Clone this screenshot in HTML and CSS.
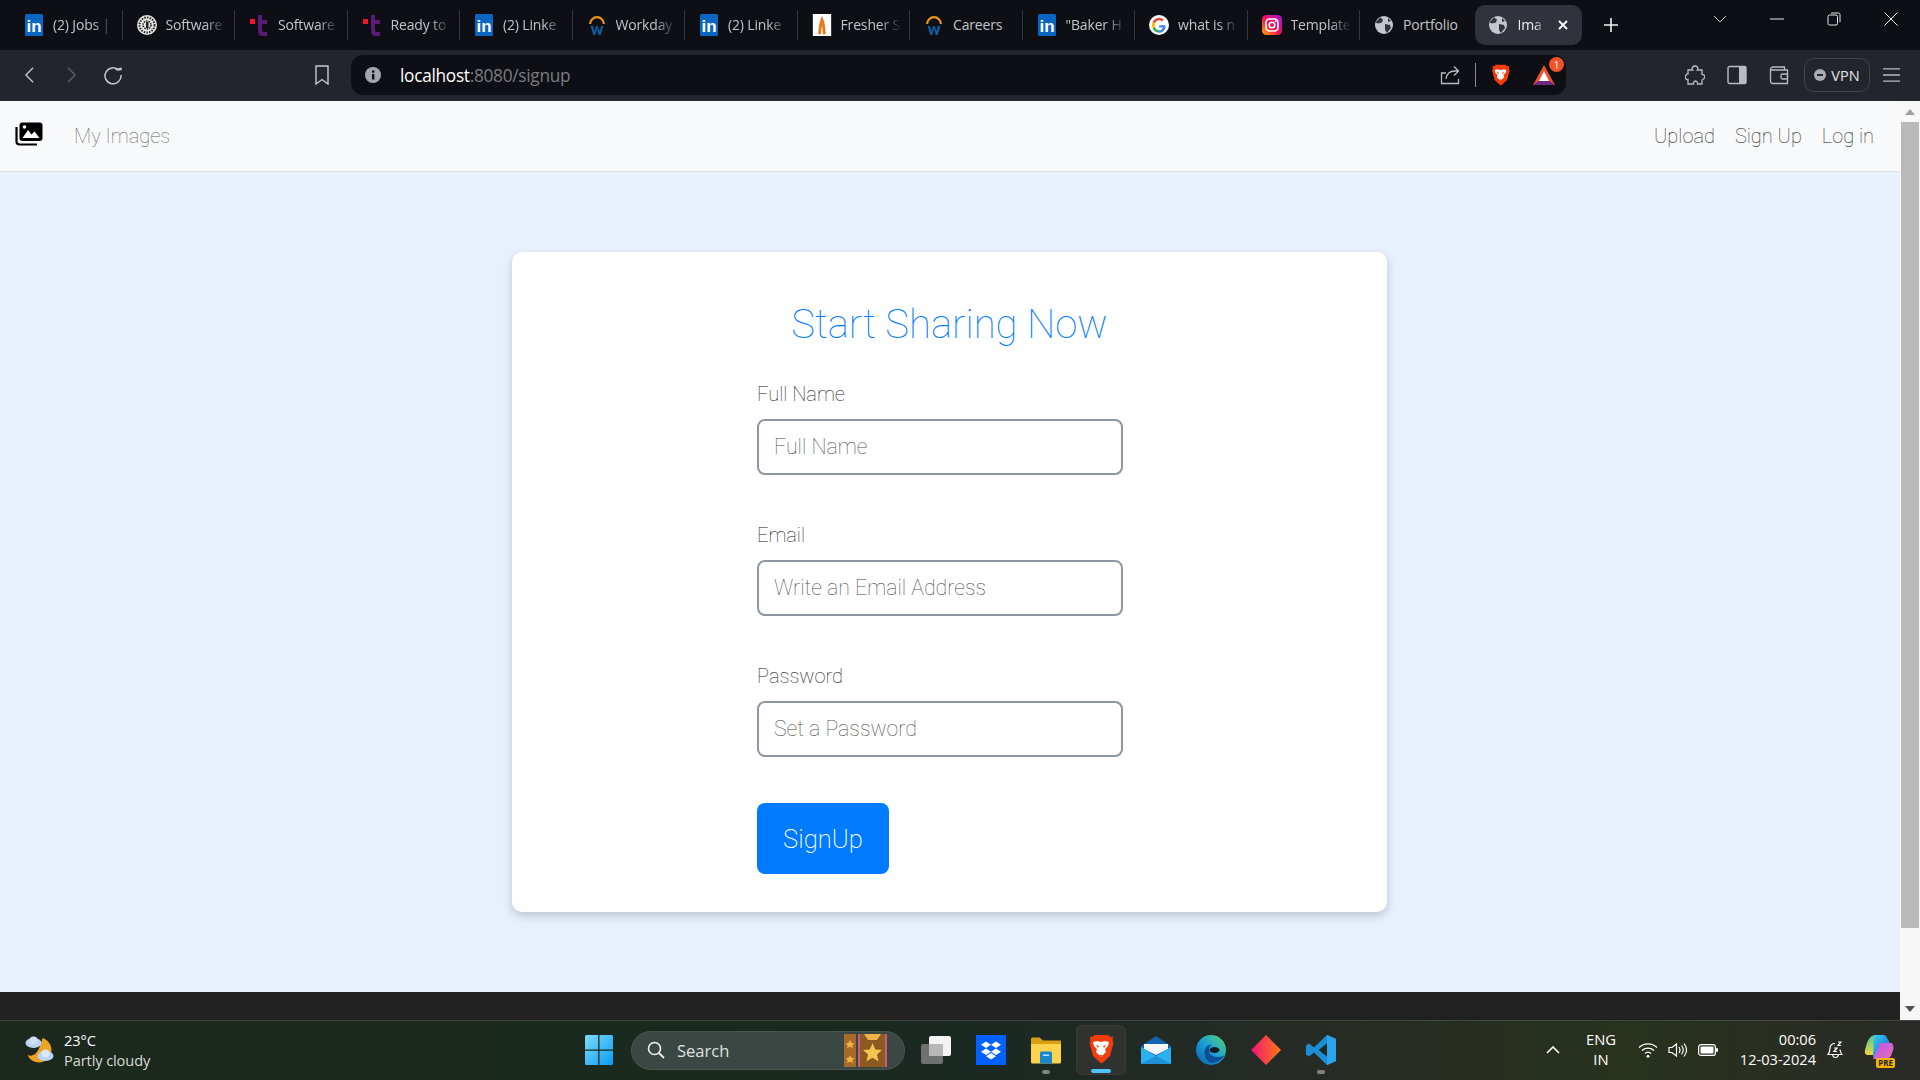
FILE: index.html
```html
<!DOCTYPE html>
<html lang="en">
<head>
<meta charset="utf-8">
<title>Images</title>
<link rel="stylesheet" href="styles.css">
</head>
<body>
<svg class="defs" width="0" height="0" aria-hidden="true">
  <symbol id="i-in" viewBox="0 0 18 22">
    <rect x="0" y="0" width="18" height="22" rx="1.500" fill="#0a66c2"/>
    <text x="9" y="18" text-anchor="middle" class="logo-in">in</text>
  </symbol>
  <symbol id="i-t" viewBox="0 0 20 22">
    <rect x="1" y="5" width="5" height="5" fill="#f0142f"/>
    <path d="M9 1h4v5h5v4h-5v6q0 2 2 2h3v4h-4q-5 0-5-5z" fill="#5a1a78"/>
  </symbol>
  <symbol id="i-w" viewBox="0 0 20 24">
    <path d="M2.500 11a7.500 7.500 0 0 1 15 0" fill="none" stroke="#e8961e" stroke-width="2.400"/>
    <path d="M3 13l3 10h2l2-7 2 7h2l3-10h-2.600l-1.600 6-2-6h-1.600l-2 6-1.600-6z" fill="#0b5fa5"/>
  </symbol>
  <symbol id="i-globe" viewBox="0 0 20 20">
    <circle cx="10" cy="10" r="9" fill="#c4c6cb"/>
    <path d="M6 2.500l3 2-1 3-4 1-2.500-1zM11 9l5 1 1 3-4 5-2-3zM14 3l3 3-3 1z" fill="#31343b"/>
  </symbol>
  <symbol id="i-lion" viewBox="0 0 26 30">
    <path d="M6 1h14l2 2 3-.5-.5 4 1 2.500-3.500 13-6.500 6-2 1.500-2-1.500-6.500-6L1.500 9l1-2.500-.5-4 3 .5z" fill="#f23c0c"/>
    <path d="M5 8l4-1 4 1 4-1 4 1-1 4-3 3 1 3-5 5-5-5 1-3-3-3z" fill="#fff"/>
    <path d="M8 11l3 1-1 2zM18 11l-3 1 1 2zM11 21h4l-2 2z" fill="#f23c0c"/>
  </symbol>
</svg>

<div class="app">
  <header class="tabbar">
    <div class="tabs">
      <div class="tab"><svg class="fav" viewBox="0 0 18 22"><use href="#i-in"/></svg><span class="tab-title">(2) Jobs |</span></div>
      <div class="tab"><svg class="fav" viewBox="0 0 20 20"><circle cx="10" cy="10" r="10" fill="#e8e8e8"/><circle cx="10" cy="10" r="7.500" fill="none" stroke="#222" stroke-width="2" stroke-dasharray="1.500 1.200"/><circle cx="10" cy="10" r="4" fill="none" stroke="#222" stroke-width="1.600" stroke-dasharray="1.500 1"/><rect x="9" y="7" width="2.500" height="6" fill="#222"/></svg><span class="tab-title">Software</span></div>
      <div class="tab"><svg class="fav" viewBox="0 0 20 22"><use href="#i-t"/></svg><span class="tab-title">Software</span></div>
      <div class="tab"><svg class="fav" viewBox="0 0 20 22"><use href="#i-t"/></svg><span class="tab-title">Ready to</span></div>
      <div class="tab"><svg class="fav" viewBox="0 0 18 22"><use href="#i-in"/></svg><span class="tab-title">(2) Linke</span></div>
      <div class="tab"><svg class="fav" viewBox="0 0 20 24"><use href="#i-w"/></svg><span class="tab-title">Workday</span></div>
      <div class="tab"><svg class="fav" viewBox="0 0 18 22"><use href="#i-in"/></svg><span class="tab-title">(2) Linke</span></div>
      <div class="tab"><svg class="fav" viewBox="0 0 20 24"><rect width="20" height="24" fill="#fff"/><path d="M10 2q4 9 4 20h-3q0-6-1-9-1 3-1 9H6q0-11 4-20z" fill="#e8781a"/></svg><span class="tab-title">Fresher S</span></div>
      <div class="tab"><svg class="fav" viewBox="0 0 20 24"><use href="#i-w"/></svg><span class="tab-title tab-title-full">Careers</span></div>
      <div class="tab"><svg class="fav" viewBox="0 0 18 22"><use href="#i-in"/></svg><span class="tab-title">"Baker H</span></div>
      <div class="tab"><svg class="fav" viewBox="0 0 20 20"><circle cx="10" cy="10" r="10" fill="#fff"/><path d="M16.500 10.200h-6.300v2.400h3.600a3.900 3.900 0 0 1-3.700 2.700V18a6.600 6.600 0 0 0 6.400-7.800z" fill="#4285f4"/><path d="M5.900 11.800 3.700 13.400A7.300 7.300 0 0 0 10 17.500v-2.200a4.500 4.500 0 0 1-4.100-3.500z" fill="#34a853"/><path d="M5.700 10c0-.7.100-1.300.3-1.900L3.700 6.500a7.300 7.300 0 0 0 0 6.900l2.200-1.600c-.1-.5-.2-1.200-.2-1.800z" fill="#fbbc05"/><path d="M10 5.300c1.200 0 2.200.4 3 1.100l1.800-1.800A7.300 7.300 0 0 0 3.700 6.500L6 8.100a4.400 4.400 0 0 1 4-2.800z" fill="#ea4335"/></svg><span class="tab-title">what is n</span></div>
      <div class="tab"><svg class="fav" viewBox="0 0 20 20"><defs><linearGradient id="ig" x1="0" y1="1" x2="1" y2="0"><stop offset="0" stop-color="#fdb300"/><stop offset=".45" stop-color="#f3134f"/><stop offset="1" stop-color="#a510e0"/></linearGradient></defs><rect width="20" height="20" rx="4.500" fill="url(#ig)"/><rect x="4" y="4" width="12" height="12" rx="3.500" fill="none" stroke="#fff" stroke-width="1.600"/><circle cx="10" cy="10" r="2.800" fill="none" stroke="#fff" stroke-width="1.600"/><circle cx="13.700" cy="6.300" r="1" fill="#fff"/></svg><span class="tab-title">Template</span></div>
      <div class="tab tab-last"><svg class="fav" viewBox="0 0 20 20"><use href="#i-globe"/></svg><span class="tab-title tab-title-full">Portfolio</span></div>
      <div class="tab tab-active"><svg class="fav" viewBox="0 0 20 20"><use href="#i-globe"/></svg><span class="tab-title">Ima</span>
        <svg class="tab-x" viewBox="0 0 10 10"><path d="M1 1l8 8M9 1l-8 8" stroke="#fff" stroke-width="1.800" fill="none"/></svg>
      </div>
    </div>
    <svg class="newtab" viewBox="0 0 16 16"><path d="M8 1v14M1 8h14" stroke="#f2f2f2" stroke-width="1.600" fill="none"/></svg>
    <div class="winctl">
      <div class="winbtn"><svg viewBox="0 0 14 8" width="14" height="8"><path d="M1 1l6 6 6-6" stroke="#c8c8c8" fill="none"/></svg></div>
      <div class="winbtn"><svg viewBox="0 0 14 2" width="14" height="2"><path d="M0 1h14" stroke="#e8e8e8"/></svg></div>
      <div class="winbtn"><svg viewBox="0 0 14 14" width="14" height="14"><rect x="1" y="3" width="9.500" height="10" rx="1.500" fill="none" stroke="#e8e8e8"/><path d="M4 1h7.500q1.500 0 1.500 1.500V10" fill="none" stroke="#e8e8e8"/></svg></div>
      <div class="winbtn"><svg viewBox="0 0 14 14" width="14" height="14"><path d="M.5.500l13 13M13.500.500l-13 13" stroke="#f0f0f0" fill="none"/></svg></div>
    </div>
  </header>

  <div class="toolbar">
    <div class="tb-btn"><svg viewBox="0 0 12 20" width="11" height="18"><path d="M10 2L2 10l8 8" fill="none" stroke="#c6c8cd" stroke-width="1.500"/></svg></div>
    <div class="tb-btn"><svg viewBox="0 0 12 20" width="11" height="18"><path d="M2 2l8 8-8 8" fill="none" stroke="#5e6168" stroke-width="1.500"/></svg></div>
    <div class="tb-btn"><svg viewBox="0 0 20 20" width="20" height="20"><path d="M16 5.500A8 8 0 1 0 18 10" fill="none" stroke="#c6c8cd" stroke-width="1.500"/><path d="M12.500 4.500h5.500v-1z" fill="#c6c8cd" stroke="#c6c8cd" stroke-width="1.500"/></svg></div>
    <div class="tb-btn tb-bookmark"><svg viewBox="0 0 14 20" width="14" height="20"><path d="M1 1h12v18l-6-4.500L1 19z" fill="none" stroke="#c6c8cd" stroke-width="1.400"/></svg></div>
    <div class="urlbar">
      <svg class="url-info" viewBox="0 0 16 16"><circle cx="8" cy="8" r="8" fill="#a3a6ac"/><rect x="7" y="7" width="2.400" height="5.500" fill="#0e0f14"/><rect x="7" y="3.500" width="2.400" height="2.200" fill="#0e0f14"/></svg>
      <span class="url-text"><span class="url-host">localhost</span>:8080/signup</span>
      <svg class="url-share" viewBox="0 0 20 20"><path d="M6 8H1.500v10.500h17V14" fill="none" stroke="#b9bbc0" stroke-width="1.300"/><path d="M6 14q1-8 9-8h3M14 1.500L18.500 6 14 10.500" fill="none" stroke="#b9bbc0" stroke-width="1.300"/></svg>
      <span class="url-sep"></span>
      <svg class="url-lion" viewBox="0 0 26 30"><use href="#i-lion"/></svg>
      <div class="bat">
        <svg viewBox="0 0 24 24" width="24" height="24"><path d="M12 2l11 20H1z" fill="#f0502a"/><path d="M1 22l5.500-4h11l5.500 4z" fill="#6a2a88"/><path d="M12 8l5 10H7z" fill="#fff"/></svg>
        <span class="bat-badge">1</span>
      </div>
    </div>
    <div class="tb-btn tb-ext"><svg viewBox="0 0 20 20" width="20" height="20"><path d="M7 3.500Q7.500 1 10 1t3 2.500q0 1-.5 1.500H17v4.500q2-.5 2.500 1.500t-1 3-1.500.5v4.500h-4.500q.5-2.500-2-3-2.500.5-2 3H3v-4.500q-2 .5-2.500-1.500T1.500 9.500 3 9.500V5h4.500Q7 4.500 7 3.500z" fill="none" stroke="#b9bbc0" stroke-width="1.300"/></svg></div>
    <div class="tb-btn"><svg viewBox="0 0 20 20" width="20" height="20"><rect x="1" y="1.500" width="18" height="17" rx="1.500" fill="none" stroke="#b9bbc0" stroke-width="1.400"/><rect x="12" y="1.500" width="7" height="17" fill="#b9bbc0"/></svg></div>
    <div class="tb-btn"><svg viewBox="0 0 20 20" width="20" height="20"><path d="M1.500 5q0-3 3-3h11v3M1.500 5v11q0 2.500 2.500 2.500h14.500V5H1.500z" fill="none" stroke="#b9bbc0" stroke-width="1.300"/><rect x="12" y="9" width="6.500" height="5" rx="1.500" fill="none" stroke="#b9bbc0" stroke-width="1.300"/></svg></div>
    <div class="vpn"><svg viewBox="0 0 12 12" width="12" height="12"><circle cx="6" cy="6" r="6" fill="#a9acb2"/><rect x="3" y="5" width="6" height="2" fill="#23252d"/></svg><span>VPN</span></div>
    <div class="tb-btn"><svg viewBox="0 0 18 16" width="17" height="16"><path d="M0 1.500h18M0 8h18M0 14.500h18" stroke="#b9bbc0" stroke-width="1.400"/></svg></div>
  </div>

  <div class="viewport">
    <div class="page">
      <nav class="navbar">
        <svg class="brand" viewBox="0 0 28 24"><path d="M1.500 5v14.500q0 3 3 3H22" fill="none" stroke="#000" stroke-width="2.200"/><rect x="4.500" y="0.500" width="23" height="18.500" rx="3" fill="#000"/><path d="M7.500 16l5.500-8 3.500 4.500 3-3 5 6.500z" fill="#fff"/><circle cx="9.500" cy="5" r="1.800" fill="#fff"/></svg>
        <a class="nav-brand-link">My Images</a>
        <div class="nav-right">
          <a class="nav-link">Upload</a>
          <a class="nav-link">Sign Up</a>
          <a class="nav-link">Log in</a>
        </div>
      </nav>
      <main class="content">
        <section class="card">
          <h1 class="card-title">Start Sharing Now</h1>
          <form class="form">
            <div class="group">
              <label class="label" for="f-name">Full Name</label>
              <input class="input" id="f-name" type="text" placeholder="Full Name">
            </div>
            <div class="group">
              <label class="label" for="f-email">Email</label>
              <input class="input" id="f-email" type="email" placeholder="Write an Email Address">
            </div>
            <div class="group">
              <label class="label" for="f-pass">Password</label>
              <input class="input" id="f-pass" type="password" placeholder="Set a Password">
            </div>
            <button class="submit" type="button">SignUp</button>
          </form>
        </section>
      </main>
      <div class="strip"></div>
    </div>
    <aside class="scrollbar">
      <span class="arrow arrow-up"></span>
      <span class="thumb"></span>
      <span class="arrow arrow-down"></span>
    </aside>
  </div>

  <footer class="taskbar">
    <div class="weather">
      <svg class="weather-icon" viewBox="0 0 30 30"><path d="M18 3a12.500 12.500 0 1 1-15 17q10 4 15-17z" fill="#eea324"/><ellipse cx="9" cy="8" rx="8" ry="5" fill="#b9d4f4"/><circle cx="9" cy="5.500" r="4" fill="#cfe0f6"/><ellipse cx="21" cy="21" rx="8" ry="5" fill="#b9d4f4"/><circle cx="21" cy="18.500" r="4" fill="#dbe8f8"/></svg>
      <div class="weather-text"><span class="temp">23°C</span><span class="cond">Partly cloudy</span></div>
    </div>
    <div class="task-center">
      <svg class="task-win" viewBox="0 0 28 30"><defs><linearGradient id="wg" x1="0" y1="0" x2="1" y2="1"><stop offset="0" stop-color="#7fdcfb"/><stop offset="1" stop-color="#0a9af5"/></linearGradient></defs><path d="M0 1.500Q0 0 1.500 0h11.700v14.500H0zM14.500 0h12Q28 0 28 1.500v13H14.500zM0 15.800h13.200V30H1.500Q0 30 0 28.500zM14.500 15.800H28v12.700q0 1.500-1.500 1.500h-12z" fill="url(#wg)"/></svg>
      <div class="search">
        <svg class="search-icon" viewBox="0 0 18 18"><circle cx="7.500" cy="7.500" r="6" fill="none" stroke="#f0f0f0" stroke-width="1.600"/><path d="M12 12l5 5" stroke="#f0f0f0" stroke-width="1.800"/></svg>
        <span class="search-text">Search</span>
        <svg class="search-art" viewBox="0 0 43 33"><rect width="12" height="33" fill="#a86a28"/><rect x="14" width="29" height="33" fill="#8a5a20"/><rect x="14" width="2" height="33" fill="#d0587a"/><rect x="41" width="2" height="33" fill="#d0587a"/><path d="M28.500 9l2.800 6.500 6.700.6-5 4.500 1.500 6.700-6-3.500-6 3.500 1.500-6.700-5-4.500 6.700-.6z" fill="#f6c453"/><path d="M20 0h17l-4 6h-9zM6 6l1.500 3 3 .3-2.200 2 .7 3-3-1.700-3 1.700.7-3-2.200-2 3-.3zM6 21l1.500 3 3 .3-2.200 2 .7 3-3-1.700-3 1.700.7-3-2.200-2 3-.3z" fill="#eeb44a"/></svg>
      </div>
      <svg class="task-icon" viewBox="0 0 30 30"><rect x="0" y="9" width="22" height="20" rx="2" fill="#6f7070"/><rect x="8" y="1" width="22" height="20" rx="2" fill="#f4f4f4"/><rect x="8" y="9" width="14" height="12" fill="#b8b8b8"/></svg>
      <svg class="task-icon" viewBox="0 0 30 30"><rect width="30" height="30" fill="#0061fe"/><path d="M10 6.500l5 3.200-5 3.200-5-3.200zM20 6.500l5 3.200-5 3.200-5-3.200zM10 13.500l5 3.200-5 3.200-5-3.200zM20 13.500l5 3.200-5 3.200-5-3.200zM15 18l5 3.200-5 3.200-5-3.200z" fill="#fff"/></svg>
      <div class="task-slot">
        <svg class="task-icon" viewBox="0 0 30 30"><path d="M0 4q0-1.500 1.500-1.500h7L12 5.500h18V13H0z" fill="#d8a010"/><path d="M0 9h30v18q0 1.500-1.500 1.500h-27Q0 28.500 0 27z" fill="#fbd34d"/><path d="M9 18q0-1.500 1.500-1.500h9Q21 16.500 21 18v10.500H9z" fill="#1a86d0"/><rect x="12" y="19.500" width="6" height="1.500" fill="#bfe3fa"/></svg>
        <span class="dot"></span>
      </div>
      <div class="task-slot task-active">
        <svg class="task-lion" viewBox="0 0 26 30"><use href="#i-lion"/></svg>
        <span class="dot dot-active"></span>
      </div>
      <svg class="task-icon" viewBox="0 0 30 30"><path d="M15 1l15 10v18H0V11z" fill="#0f64ad"/><path d="M3 9h24v5L15 20 3 14z" fill="#f2f6fb"/><path d="M0 12l15 9 15-9v17H0z" fill="#2ab0ee"/><path d="M0 29l15-8 15 8z" fill="#1e90d8"/></svg>
      <svg class="task-icon" viewBox="0 0 30 30"><defs><linearGradient id="eg" x1="0" y1="1" x2="1" y2="0"><stop offset="0" stop-color="#0a5ea8"/><stop offset=".5" stop-color="#1aa0d8"/><stop offset="1" stop-color="#55d668"/></linearGradient></defs><circle cx="15" cy="15" r="15" fill="url(#eg)"/><path d="M30 17q-1 5-8 5-8 0-9-6-.5-5 3-6.500-6 0-7.500 6-1 8 6 12.500Q25 29 30 17z" fill="#0d4d94"/><ellipse cx="18.500" cy="15" rx="5" ry="3" fill="#0f1c22"/></svg>
      <svg class="task-icon" viewBox="0 0 30 30"><defs><linearGradient id="dg" x1="0" y1="0" x2="1" y2="0"><stop offset="0" stop-color="#f0137a"/><stop offset="1" stop-color="#ff7a10"/></linearGradient></defs><path d="M15 0l15 15-15 15L0 15z" fill="url(#dg)"/></svg>
      <div class="task-slot">
        <svg class="task-icon" viewBox="0 0 30 30"><path d="M21 0l9 4v22l-9 4L8 17.500l-5 4-3-2V10.500l3-2 5 4zM21 8.500L13 15l8 6.500z" fill="#1c8ed6"/><path d="M21 0l9 4v22l-9 4z" fill="#2aa4ea"/><path d="M21 8.500L13 15l8 6.500z" fill="#1b2a22"/></svg>
        <span class="dot"></span>
      </div>
    </div>
    <div class="tray">
      <svg class="tray-chev" viewBox="0 0 14 8"><path d="M1 7l6-6 6 6" fill="none" stroke="#fff" stroke-width="1.600"/></svg>
      <div class="lang"><span>ENG</span><span>IN</span></div>
      <svg class="tray-ic" viewBox="0 0 20 16"><path d="M1 5.500a13 13 0 0 1 18 0M4 8.500a9 9 0 0 1 12 0M7 11.500a4.500 4.500 0 0 1 6 0" fill="none" stroke="#fff" stroke-width="1.300"/><circle cx="10" cy="14.300" r="1.400" fill="#fff"/></svg>
      <svg class="tray-ic" viewBox="0 0 20 16"><path d="M1 5.500h3L8.500 2v12L4 10.500H1z" fill="none" stroke="#fff" stroke-width="1.200"/><path d="M11 5q2 3 0 6M13.500 3.500q3.500 4.500 0 9M16 1.500q5 6.500 0 13" fill="none" stroke="#fff" stroke-width="1.200"/></svg>
      <svg class="tray-ic" viewBox="0 0 20 12"><rect x=".6" y=".6" width="16.800" height="10.800" rx="2.500" fill="none" stroke="#fff" stroke-width="1.200"/><rect x="2.500" y="2.500" width="13" height="7" rx="1" fill="#fff"/><rect x="18" y="4" width="2" height="4" rx="1" fill="#fff"/></svg>
      <div class="clock"><span>00:06</span><span>12-03-2024</span></div>
      <svg class="tray-bell" viewBox="0 0 18 18"><path d="M8 2.500q-4.500 0-5 4.500 0 4-2 6.500h14q-2-2.500-2-5" fill="none" stroke="#fff" stroke-width="1.200"/><path d="M5.500 13.500q.5 3 3 3t3-3" fill="none" stroke="#fff" stroke-width="1.200"/><path d="M11 1h3l-3 3.500h3M7 7h3L7 10.500h3" fill="none" stroke="#fff" stroke-width="1.200"/></svg>
      <div class="copilot">
        <svg viewBox="0 0 30 26" width="30" height="26"><defs><linearGradient id="cb" x1="0" y1="0" x2="1" y2="1"><stop offset="0" stop-color="#2fd0e8"/><stop offset="1" stop-color="#1f5fd8"/></linearGradient><linearGradient id="cp" x1="0" y1="0" x2="1" y2="1"><stop offset="0" stop-color="#b05ae8"/><stop offset="1" stop-color="#f06ab8"/></linearGradient><linearGradient id="cl" x1="0" y1="0" x2="0" y2="1"><stop offset="0" stop-color="#4cc8a0"/><stop offset="1" stop-color="#f2d640"/></linearGradient></defs><path d="M3 8q2-6 7-8h10l-6 20H4Q0 20 1 15z" fill="url(#cl)"/><path d="M10 0h9q3 0 4 3l3 5H17L12 22H9z" fill="url(#cb)"/><path d="M16 8h12q3 4 0 10-1 6-8 6H9z" fill="url(#cp)"/></svg>
        <span class="pre">PRE</span>
      </div>
    </div>
  </footer>
</div>
</body>
</html>
```
FILE: styles.css
```css
* { box-sizing: border-box; }
html, body { margin: 0; padding: 0; height: 100%; overflow: hidden; }
body { font-family: Roboto, "Noto Sans", sans-serif; background: #222; }
.defs { display: none; }
.logo-in { font: 700 17px "Liberation Sans", sans-serif; fill: #fff; }

.app { display: flex; flex-direction: column; height: 1080px; width: 1920px; }

/* tab strip */
.tabbar { height: 50px; flex: none; display: flex; align-items: flex-start; background: #0e0f14; padding-left: 10px; }
.tabs { display: flex; padding-top: 5px; }
.tab { width: 112.500px; height: 40px; display: flex; align-items: center; padding: 0 6px 0 14px; position: relative; gap: 9px; }
.tab::after { content: ""; position: absolute; right: 0; top: 5px; height: 30px; width: 1px; background: #34363b; }
.tab-last { margin-right: 2px; }
.tab-last::after, .tab-active::after { display: none; }
.fav { width: 20px; height: 22px; flex: none; margin-top: -1px; }
.tab-title { flex: 1; min-width: 0; white-space: nowrap; margin-top: -1px; font: 400 14px "Open Sans", sans-serif; letter-spacing: -.15px; color: #c3c5c9; -webkit-mask-image: linear-gradient(90deg, #000 62%, transparent 96%); mask-image: linear-gradient(90deg, #000 62%, transparent 96%); }
.tab-title-full { -webkit-mask-image: none; mask-image: none; }
.tab-active { width: 107px; background: #30333b; border-radius: 10px; padding: 0 13px; gap: 10px; }
.tab-active .tab-title { color: #eee; flex: none; width: 28px; }
.tab-x { width: 10px; height: 10px; flex: none; margin-left: 2px; }
.newtab { width: 16px; height: 16px; margin: 17px 0 0 21px; flex: none; }
.winctl { display: flex; margin-left: auto; padding-right: 1px; }
.winbtn { width: 57px; height: 38px; display: flex; align-items: center; justify-content: center; }

/* toolbar */
.toolbar { height: 51px; flex: none; display: flex; align-items: center; background: #23252d; padding: 0 0 1px 8px; }
.tb-btn { width: 42px; height: 40px; display: flex; align-items: center; justify-content: center; flex: none; }
.tb-bookmark { margin-left: 167px; margin-right: 8px; }
.tb-ext { margin-left: 108px; }
.urlbar { width: 1215px; height: 40px; flex: none; background: #0e0f14; border-radius: 12px; display: flex; align-items: center; padding-left: 14px; }
.url-info { width: 16px; height: 16px; flex: none; }
.url-text { margin-left: 19px; font: 400 17.300px "Open Sans", sans-serif; color: #7a7c82; letter-spacing: -.3px; }
.url-host { color: #fff; }
.url-share { width: 20px; height: 20px; margin-left: auto; flex: none; }
.url-sep { width: 1px; height: 24px; background: #8a8c92; margin: 0 15px; flex: none; }
.url-lion { width: 19px; height: 26px; flex: none; }
.bat { position: relative; width: 24px; height: 24px; margin: 0 10px 0 22px; flex: none; }
.bat-badge { position: absolute; top: -6px; right: -8px; width: 15px; height: 15px; border-radius: 50%; background: #f4502a; color: #fff; font: 400 10px "Open Sans", sans-serif; display: flex; align-items: center; justify-content: center; }
.vpn { width: 66px; height: 34px; margin-left: 4px; border: 1px solid #43464e; border-radius: 10px; display: flex; align-items: center; justify-content: center; gap: 5px; color: #e4e5e8; font: 400 14.500px "Open Sans", sans-serif; flex: none; }

/* page */
.viewport { flex: 1; display: flex; min-height: 0; }
.page { flex: 1; min-width: 0; display: flex; flex-direction: column; background: #e8f0fe; }
.navbar { height: 71px; flex: none; display: flex; align-items: center; background: #f8f9fa; border-bottom: 1px solid #dfe1e5; padding: 0 26px 0 15px; font-weight: 100; font-size: 20px; }
.brand { width: 28px; height: 24px; flex: none; margin-top: -5px; }
.nav-brand-link { margin-left: 31px; color: #666; }
.nav-right { margin-left: auto; display: flex; gap: 20px; }
.nav-link { color: #222; }
.content { flex: 1; min-height: 0; padding: 80px 1px 0 0; }
.card { width: 875px; height: 660px; margin: 0 auto; background: #fff; border-radius: 10px; box-shadow: 0 4px 10px rgba(0,0,0,.18); padding: 49px 0 38px 245px; }
.card-title { margin: 0 0 30px -245px; text-align: center; font-size: 40px; line-height: 48px; font-weight: 100; color: #007bff; }
.form { display: flex; flex-direction: column; gap: 45.500px; width: 366px; }
.group { display: flex; flex-direction: column; }
.label { font-size: 20px; line-height: 30px; font-weight: 100; color: #111; margin-bottom: 10px; }
.input { height: 55.500px; width: 366px; border: 2px solid #8e96a3; border-radius: 8px; background: #fff; padding: 0 15px; font-family: inherit; font-size: 21.280px; font-weight: 100; outline: none; }
.input::placeholder { color: #4a4a4a; opacity: 1; }
.submit { width: 132px; height: 71px; margin-top: 1px; background: #007bff; color: #fff; border: 0; border-radius: 8px; font-family: inherit; font-size: 25.600px; font-weight: 200; padding: 0; }
.strip { height: 28px; flex: none; background: #222; }

/* scrollbar */
.scrollbar { width: 20px; flex: none; background: #f7f7f7; display: flex; flex-direction: column; align-items: center; }
.arrow { width: 0; height: 0; border-left: 5px solid transparent; border-right: 5px solid transparent; flex: none; }
.arrow-up { border-bottom: 6px solid #a0a0a0; margin-top: 8px; }
.arrow-down { border-top: 6px solid #505050; margin-bottom: 8px; }
.thumb { width: 18px; height: 806px; background: #b9b9b9; margin: 7px 0 auto; flex: none; }

/* taskbar */
.taskbar { height: 60px; flex: none; display: flex; align-items: center; padding-bottom: 1px; border-top: 1px solid #40453e; background: linear-gradient(90deg, #1c281d, #1a2a1e 40%, #1a2822 50%, #272b26 68%, #28321c 85%, #2a2a28 100%); color: #fff; font-family: "Open Sans", sans-serif; }
.weather { display: flex; align-items: center; padding-left: 24px; gap: 9px; width: 585px; flex: none; }
.weather-icon { width: 31px; height: 30px; flex: none; }
.weather-text { display: flex; flex-direction: column; font-size: 14.600px; line-height: 20px; letter-spacing: -.1px; margin-top: -1px; }
.cond { color: #d8dad6; }
.task-center { display: flex; align-items: center; width: 751px; flex: none; }
.task-win { width: 28px; height: 30px; flex: none; margin-right: 18px; }
.search { width: 274px; height: 39px; border-radius: 20px; background: #3b4742; border: 1px solid #4a544f; display: flex; align-items: center; padding-left: 15px; flex: none; margin-right: 16px; }
.search-icon { width: 18px; height: 18px; flex: none; }
.search-text { margin-left: 12px; font-size: 16.500px; color: #dfe2e0; }
.search-art { width: 43px; height: 33px; margin-left: auto; margin-right: 17px; flex: none; }
.task-icon { width: 30px; height: 30px; flex: none; margin-right: 25px; display: block; }
.task-slot { position: relative; width: 55px; flex: none; height: 50px; display: flex; align-items: center; }
.task-slot .task-icon { margin: 0; }
.dot { position: absolute; left: 11px; bottom: 1px; width: 8px; height: 4px; border-radius: 2px; background: #7e837f; }
.task-active { width: 50px; margin: 0 15px 0 -10px; justify-content: center; background: #2f322f; border: 1px solid #393c39; border-radius: 6px; padding-bottom: 3px; }
.task-lion { width: 26px; height: 30px; }
.dot-active { left: 14px; width: 20px; bottom: 1px; background: #4cc2ff; }
.tray { flex: 1; min-width: 0; display: flex; align-items: center; color: #fff; }
.tray-chev { width: 14px; height: 8px; margin-left: 210px; flex: none; }
.lang { width: 40px; margin-left: 21px; display: flex; flex-direction: column; align-items: center; font-size: 14.800px; line-height: 20px; margin-top: -2px; }
.tray-ic { width: 20px; height: 16px; margin-left: 10px; flex: none; }
.lang + .tray-ic { margin-left: 17px; }
.clock { margin-left: 6px; width: 92px; display: flex; flex-direction: column; align-items: flex-end; font-size: 14.600px; line-height: 20px; margin-top: -2px; }
.tray-bell { width: 18px; height: 18px; margin-left: 11px; flex: none; }
.copilot { position: relative; width: 30px; height: 30px; margin-left: 19px; flex: none; }
.pre { position: absolute; right: -1px; bottom: -3px; background: #f4b400; color: #222; font: 700 8px "Open Sans", sans-serif; border-radius: 2px; padding: 0 2px; line-height: 10px; }
```
